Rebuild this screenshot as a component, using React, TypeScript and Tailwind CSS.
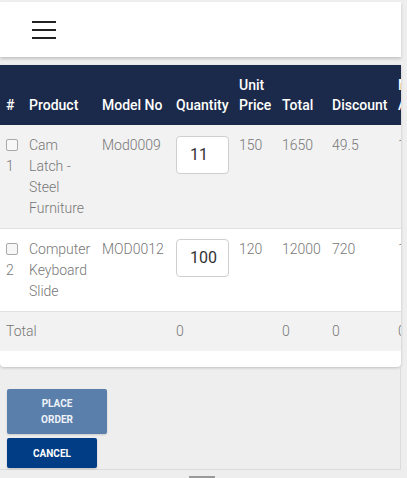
import React from "react";

const Check = () => (
  <span className="inline-block w-[12px] h-[12px] rounded-[2px] border border-[#a8a8a8] bg-[#f7f7f7] align-[-1px]" />
);

const Qty = ({ v }: { v: string }) => (
  <div className="w-[53px] h-[38px] rounded-[4px] border border-[#cfcfcf] bg-white text-[16px] text-[#333] font-normal flex items-center pl-[13px] leading-none">
    {v}
  </div>
);

export default function App() {
  const th = "px-[6px] pb-[10px] align-bottom text-left font-medium leading-[20px]";
  const td = "px-[6px] pt-[10px] pb-[9px] align-top text-left";
  return (
    <div
      className="min-h-[478px] bg-[#eeeeee] pt-[2px] overflow-hidden"
      style={{ fontFamily: "Roboto, 'Liberation Sans', sans-serif" }}
    >
      <div className="w-[401px] h-[55px] bg-white shadow-[0_2px_3px_rgba(0,0,0,0.18)] flex items-center pl-[32px]">
        <div className="flex flex-col gap-[6px]">
          <div className="w-[24px] h-[2px] bg-[#222]" />
          <div className="w-[24px] h-[2px] bg-[#222]" />
          <div className="w-[24px] h-[2px] bg-[#222]" />
        </div>
      </div>

      <div className="w-[401px] mt-[8px] bg-white rounded-b-[4px] shadow-[0_1px_3px_rgba(0,0,0,0.2)] overflow-hidden pb-[16px]">
        <table className="table-fixed w-[450px] border-collapse text-[14px]">
          <colgroup>
            <col className="w-[23px]" />
            <col className="w-[73px]" />
            <col className="w-[74px]" />
            <col className="w-[63px]" />
            <col className="w-[43px]" />
            <col className="w-[50px]" />
            <col className="w-[66px]" />
            <col className="w-[58px]" />
          </colgroup>
          <thead>
            <tr className="bg-[#1b2a4a] text-white h-[60px]">
              <th className={th}>#</th>
              <th className={th + " whitespace-nowrap"}>Product</th>
              <th className={th + " whitespace-nowrap"}>Model No</th>
              <th className={th + " whitespace-nowrap"}>Quantity</th>
              <th className={th}>Unit<br />Price</th>
              <th className={th}>Total</th>
              <th className={th}>Discount</th>
              <th className={th + " whitespace-nowrap"}>Net<br />Amount</th>
            </tr>
          </thead>
          <tbody className="text-[#777] font-light leading-[21px]">
            <tr className="bg-[#f2f2f2] border-b border-[#e0e0e0]">
              <td className={td}><Check /><br />1</td>
              <td className={td}>Cam<br />Latch -<br />Steel<br />Furniture</td>
              <td className={td}>Mod0009</td>
              <td className={td + " pt-[11px]"}><Qty v="11" /></td>
              <td className={td}>150</td>
              <td className={td}>1650</td>
              <td className={td}>49.5</td>
              <td className={td}>1600.5</td>
            </tr>
            <tr className="bg-white border-b border-[#e0e0e0]">
              <td className={td}><Check /><br />2</td>
              <td className={td}>Computer<br />Keyboard<br />Slide</td>
              <td className={td + " whitespace-nowrap"}>MOD0012</td>
              <td className={td}><Qty v="100" /></td>
              <td className={td}>120</td>
              <td className={td}>12000</td>
              <td className={td}>720</td>
              <td className={td}>11280</td>
            </tr>
            <tr className="bg-[#f2f2f2]">
              <td className="px-[6px] py-[9px]" colSpan={3}>Total</td>
              <td className="px-[6px] py-[9px]">0</td>
              <td className="px-[6px] py-[9px]"></td>
              <td className="px-[6px] py-[9px]">0</td>
              <td className="px-[6px] py-[9px]">0</td>
              <td className="px-[6px] py-[9px]">0</td>
            </tr>
          </tbody>
        </table>
      </div>

      <div className="w-[401px] border-r border-b border-[#dcdcdc] pt-[22px] pb-[1px] pl-[7px] flex flex-col gap-[4px]">
        <button className="w-[100px] h-[45px] rounded-[2px] bg-[#5a7fab] text-[#eef3f9] text-[10px] font-bold leading-[16px] shadow-[0_1px_2px_rgba(0,0,0,0.15)]">
          PLACE<br />ORDER
        </button>
        <button className="w-[90px] h-[30px] rounded-[2px] bg-[#003d84] text-white text-[10px] font-bold shadow-[0_1px_2px_rgba(0,0,0,0.2)]">
          CANCEL
        </button>
      </div>
      <div className="ml-[189px] mt-[6px] w-[26px] h-[4px] bg-[#9a9a9a]" />
    </div>
  );
}
